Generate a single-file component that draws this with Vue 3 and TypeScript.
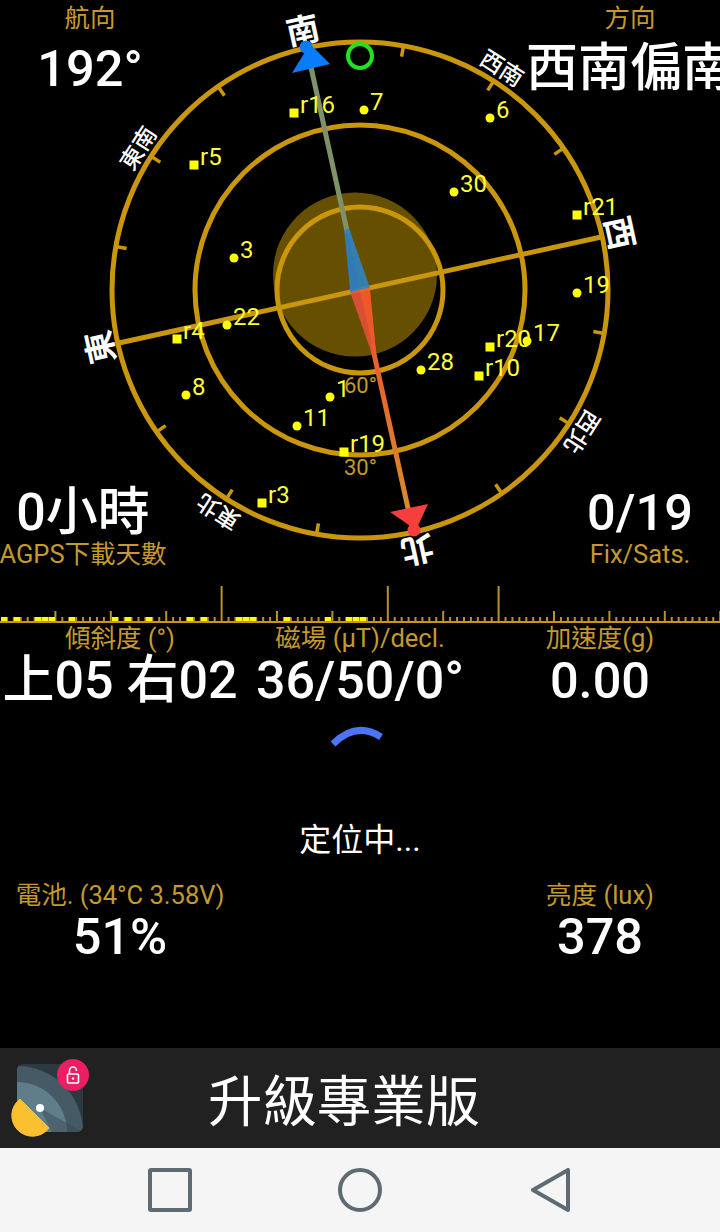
<script setup lang="ts">
interface Sat { id: string; x: number; y: number; square: boolean }
const rot = -12.4
const cx = 360
const cy = 290

const sats: Sat[] = [
  { id: 'r16', x: 294, y: 113, square: true },
  { id: '7', x: 364, y: 110, square: false },
  { id: '6', x: 490, y: 118, square: false },
  { id: 'r5', x: 194, y: 165, square: true },
  { id: '30', x: 454, y: 192, square: false },
  { id: 'r21', x: 577, y: 215, square: true },
  { id: '3', x: 234, y: 258, square: false },
  { id: '19', x: 577, y: 293, square: false },
  { id: '22', x: 227, y: 325, square: false },
  { id: 'r4', x: 177, y: 339, square: true },
  { id: 'r20', x: 490, y: 347, square: true },
  { id: '17', x: 527, y: 341, square: false },
  { id: '28', x: 421, y: 370, square: false },
  { id: 'r10', x: 479, y: 376, square: true },
  { id: '8', x: 186, y: 395, square: false },
  { id: '1', x: 330, y: 397, square: false },
  { id: '11', x: 297, y: 426, square: false },
  { id: 'r19', x: 344, y: 452, square: true },
  { id: 'r3', x: 262, y: 503, square: true },
]

const ticks = Array.from({ length: 16 }, (_, i) => i * 22.5).filter((a) => a % 90 !== 0)
const majors = [
  { t: '南', a: 0 },
  { t: '西', a: 90 },
  { t: '北', a: 180 },
  { t: '東', a: 270 },
]
const minors = [
  { t: '西南', a: 45 },
  { t: '西北', a: 135 },
  { t: '東北', a: 225 },
  { t: '東南', a: 315 },
]

const step = 55.4 / 8
const rulerTicks = Array.from({ length: 105 }, (_, i) => {
  const x = i * step
  let h = 5
  if (i % 8 === 0) h = 11
  if (i === 32 || i === 56 || i === 72) h = 36
  return { x, h }
}).filter((t) => t.x > 0)
const signal = [4, 17, 38, 45, 52, 72, 115, 128, 149, 190, 204, 239, 246, 253, 287, 328, 349, 356, 363]
</script>

<template>
  <div class="app">
    <section class="sky">
      <svg class="compass" width="720" height="622" viewBox="0 0 720 622">
        <defs>
          <linearGradient id="southTail" gradientUnits="userSpaceOnUse" x1="0" y1="350" x2="0" y2="530">
            <stop offset="0" stop-color="#ea5c2e" />
            <stop offset="1" stop-color="#d8902a" />
          </linearGradient>
        </defs>
        <circle cx="355" cy="274.5" r="82" fill="#665000" />
        <circle :cx="cx" :cy="cy" r="248" class="ring" />
        <circle :cx="cx" :cy="cy" r="165" class="ring" />
        <circle :cx="cx" :cy="cy" r="83" class="ring" />
        <g :transform="`rotate(${rot} ${cx} ${cy})`">
          <line v-for="a in ticks" :key="a" x1="360" y1="42" x2="360" y2="53" class="tick" :transform="`rotate(${a} ${cx} ${cy})`" />
          <line x1="112" y1="290" x2="608" y2="290" class="axis" />
          <line x1="360" y1="50" x2="360" y2="232" stroke="#7f9168" stroke-width="5" />
          <rect x="357.5" y="345" width="5" height="190" fill="url(#southTail)" />
          <g opacity="0.88">
            <polygon points="357.5,228 362.5,228 370,290 350,290" fill="#2a80cf" />
            <polygon points="360,228 362.5,228 370,290 360,290" fill="#2f86c4" />
            <polygon points="350,290 370,290 362.5,352 357.5,352" fill="#e8503a" />
            <polygon points="360,290 370,290 362.5,352 360,352" fill="#ff5a2e" />
          </g>
          <text v-for="m in majors" :key="m.t" x="360" y="36" class="major" :transform="`rotate(${m.a} ${cx} ${cy})`">{{ m.t }}</text>
          <text v-for="m in minors" :key="m.t" x="360" y="35" class="minor" :transform="`rotate(${m.a} ${cx} ${cy})`">{{ m.t }}</text>
        </g>
        <circle cx="360" cy="56" r="12" fill="none" stroke="#1fe51f" stroke-width="4" />
        <polygon points="292,73 330,64 310,44" fill="#0a7cf7" />
        <circle cx="306" cy="47" r="6.5" fill="#0a7cf7" />
        <polygon points="390,512 428,504 416,530" fill="#f53f3f" />
        <circle cx="414" cy="530" r="6.5" fill="#f53f3f" />
        <text x="344" y="393" class="elev">60°</text>
        <text x="344" y="475" class="elev">30°</text>
        <g v-for="s in sats" :key="s.id">
          <rect v-if="s.square" :x="s.x - 4.5" :y="s.y - 4.5" width="9" height="9" fill="#ffff00" />
          <circle v-else :cx="s.x" :cy="s.y" r="4.5" fill="#ffff00" />
          <text :x="s.x + 6" :y="s.y" class="sat">{{ s.id }}</text>
        </g>
      </svg>
      <div class="corners">
        <div class="stat left-top">
          <span class="label">航向</span>
          <span class="value">192°</span>
        </div>
        <div class="stat right-top">
          <span class="label">方向</span>
          <span class="value wide">西南偏南</span>
        </div>
      </div>
      <div class="corners lower">
        <div class="stat left-bottom">
          <span class="value wide">0小時</span>
          <span class="label">AGPS下載天數</span>
        </div>
        <div class="stat right-bottom">
          <span class="value">0/19</span>
          <span class="label">Fix/Sats.</span>
        </div>
      </div>
    </section>

    <svg class="ruler" width="720" height="40" viewBox="0 0 720 40">
      <line v-for="t in rulerTicks" :key="t.x" :x1="t.x" :x2="t.x" :y1="37 - t.h" y2="37" stroke="#b8922e" stroke-width="2" />
      <rect v-for="x in signal" :key="x" :x="x - 3" y="32" width="6" height="6" fill="#ffff00" />
      <rect x="0" y="36" width="720" height="2" fill="#c9960c" />
    </svg>

    <section class="sensors">
      <div class="stat"><span class="label">傾斜度 (°)</span><span class="value wide">上05 右02</span></div>
      <div class="stat"><span class="label">磁場 (µT)/decl.</span><span class="value wide">36/50/0°</span></div>
      <div class="stat"><span class="label">加速度(g)</span><span class="value">0.00</span></div>
    </section>

    <section class="locating">
      <svg class="spinner" width="60" height="26" viewBox="0 0 60 26">
        <path d="M4 20 Q 27 -3 52 13" fill="none" stroke="#4d73f8" stroke-width="7" />
      </svg>
      <p class="status">定位中...</p>
    </section>

    <section class="device">
      <div class="stat"><span class="label">電池. (34°C 3.58V)</span><span class="value">51%</span></div>
      <div class="stat"><span class="label">亮度 (lux)</span><span class="value">378</span></div>
    </section>

    <section class="banner">
      <svg class="appicon" width="80" height="80" viewBox="0 9 80 80">
        <defs>
          <clipPath id="tile"><rect x="7" y="15" width="66" height="68" rx="6" /></clipPath>
        </defs>
        <g clip-path="url(#tile)">
          <rect x="7" y="15" width="66" height="68" fill="#2b3a41" />
          <circle cx="7" cy="83" r="66" fill="#455a64" />
          <circle cx="7" cy="83" r="50" fill="#5f7d8b" />
          <polygon points="30,59 73,83 73,100 50,100" fill="#37474f" opacity="0.45" />
        </g>
        <path d="M10 50 A 20.7 20.7 0 1 0 39 79 Z" fill="#fbc02d" stroke="#fbc02d" stroke-width="1" stroke-linejoin="round" />
        <circle cx="30" cy="59" r="4" fill="#fff" />
        <circle cx="63" cy="26" r="16" fill="#e91e63" />
        <rect x="57.5" y="25" width="11" height="9" rx="1" fill="none" stroke="#fff" stroke-width="1.6" />
        <path d="M59.5 25 V21.5 A3.5 3.5 0 0 1 66.5 21.5 V22" fill="none" stroke="#fff" stroke-width="1.6" />
        <circle cx="63" cy="29.5" r="1.2" fill="#fff" />
      </svg>
      <span class="upgrade">升級專業版</span>
    </section>

    <nav class="navbar">
      <svg width="44" height="44" viewBox="0 0 44 44"><rect x="2" y="2" width="40" height="40" rx="1" class="navicon" /></svg>
      <svg width="44" height="44" viewBox="0 0 44 44"><circle cx="22" cy="22" r="20" class="navicon" /></svg>
      <svg width="44" height="44" viewBox="0 0 44 44"><path d="M5 22 L40 2 V42 Z" class="navicon" /></svg>
    </nav>
  </div>
</template>

<style>
body { margin: 0; background: #000; }
</style>

<style scoped>
.app {
  width: 720px;
  height: 1232px;
  overflow: hidden;
  background: #000;
  display: flex;
  flex-direction: column;
  font-family: Roboto, "Noto Sans CJK TC", sans-serif;
  color: #fff;
}
.sky {
  position: relative;
  height: 585px;
  flex: none;
  display: flex;
  flex-direction: column;
  justify-content: space-between;
}
.compass { position: absolute; left: 0; top: 0; }
.ring { fill: none; stroke: #c9960c; stroke-width: 5; }
.tick { stroke: #c9960c; stroke-width: 3.5; }
.axis { stroke: #c9960c; stroke-width: 5; }
.major { font-size: 33px; font-weight: 700; fill: #fff; text-anchor: middle; }
.minor { font-size: 23px; font-weight: 500; fill: #fff; text-anchor: middle; }
.elev { font-size: 22px; fill: #c39a2b; }
.sat { font-size: 24px; fill: #ffff33; }
.corners {
  position: relative;
  display: flex;
  justify-content: space-between;
}
.stat {
  display: flex;
  flex-direction: column;
  align-items: center;
  white-space: nowrap;
}
.label { font-size: 25.5px; line-height: 30px; color: #c39a2b; }
.value { font-size: 50.5px; line-height: 64px; font-weight: 500; color: #fff; }
.value.wide { font-size: 52px; }
.left-top, .right-top { width: 180px; padding-top: 3px; }
.left-top .value, .right-top .value { margin-top: 4px; }
.left-bottom { width: 166px; }
.right-bottom { width: 160px; }
.lower .value { line-height: 52px; }
.lower { padding-bottom: 16px; }
.ruler { display: block; flex: none; }
.sensors {
  display: grid;
  grid-template-columns: repeat(3, 240px);
  height: 100px;
  flex: none;
  margin-top: -2px;
}
.sensors .value { line-height: 56px; }
.locating {
  flex: none;
  height: 152px;
  display: flex;
  flex-direction: column;
  align-items: center;
}
.spinner { margin-top: 1px; margin-left: -3px; flex: none; }
.status { margin: 70px 0 0; font-size: 32px; line-height: 40px; }
.device {
  display: grid;
  grid-template-columns: repeat(2, 240px);
  justify-content: space-between;
  height: 168px;
  padding-top: 5px;
  flex: none;
}
.device .value { line-height: 54px; }
.banner {
  flex: none;
  height: 100px;
  background: #212121;
  display: flex;
  align-items: center;
}
.appicon { margin-left: 10px; flex: none; overflow: visible; }
.upgrade { font-size: 54.4px; margin-left: 118px; line-height: 90px; padding-top: 10px; }
.navbar {
  flex: 1;
  background: #f5f5f5;
  display: grid;
  grid-template-columns: repeat(3, 1fr);
  justify-items: center;
  align-items: center;
  padding: 0 75px;
}
.navicon { fill: none; stroke: #5f6b73; stroke-width: 4; stroke-linejoin: round; }
</style>
